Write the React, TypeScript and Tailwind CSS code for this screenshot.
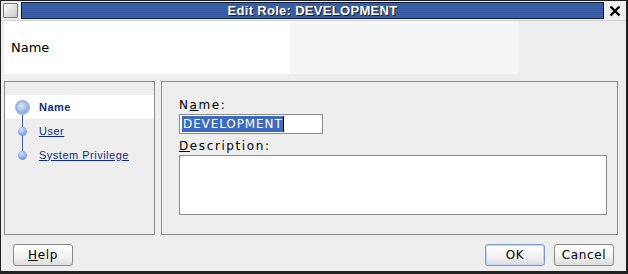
import React from 'react';

const font = { fontFamily: '"DejaVu Sans", "Liberation Sans", sans-serif' };
const navFont = { fontFamily: '"Liberation Sans", Arial, sans-serif' };

function Step({ label, active, first, last }: { label: string; active?: boolean; first?: boolean; last?: boolean }) {
  return (
    <div className={`relative flex items-center h-[24px] pl-[34px] ${active ? 'bg-white' : ''}`}>
      <div className="absolute left-[17px] w-px bg-[#3b63b8]" style={{ top: first ? 12 : 0, bottom: last ? 12 : 0 }} />
      <div
        className={`absolute rounded-full ${active ? 'left-[10px] w-[15px] h-[15px] border-2 border-[#9bb6e6] bg-[radial-gradient(circle_at_40%_35%,#dfe9fb,#6f95d8)]' : 'left-[13px] w-[9px] h-[9px] bg-[radial-gradient(circle_at_40%_30%,#d4e2fa,#4f7fd2)]'}`}
      />
      <span style={navFont} className={`text-[11px] tracking-[0.5px] text-[#0f2c8c] ${active ? 'font-bold' : 'underline'}`}>
        {label}
      </span>
    </div>
  );
}

function Btn({ children, primary }: { children: React.ReactNode; primary?: boolean }) {
  return (
    <button
      className={`w-[60px] h-[22px] rounded-[3px] border text-[12px] tracking-[0.6px] text-black bg-[linear-gradient(#ffffff,#f2f2f2_60%,#dcdcdc)] ${
        primary ? 'border-[#7b98cf] shadow-[inset_0_0_0_1px_#c7d6f0]' : 'border-[#8a8a8a]'
      }`}
    >
      {children}
    </button>
  );
}

export default function App() {
  return (
    <div style={font} className="w-[628px] h-[274px] bg-[#eeeeee] border border-[#222] border-b-[3px] border-r-[2px] flex flex-col overflow-hidden">
      {/* title bar */}
      <div className="h-[20px] flex items-center gap-[2px] px-[2px] bg-[#eeeeee] border-b border-[#d0d0d0]">
        <div className="w-[15px] h-[15px] border border-[#777] bg-[linear-gradient(135deg,#ffffff,#c8c8c8)] rounded-[1px]" />
        <div className="flex-1 h-[17px] ml-[1px] border border-[#0d1a33] bg-[repeating-linear-gradient(#3f61a8_0px,#3f61a8_1px,#3559a0_1px,#3559a0_2px)] flex items-center justify-center">
          <span style={navFont} className="text-white font-bold text-[13px] tracking-[0.3px] [text-shadow:1px_1px_0_#1a1a1a]">
            Edit Role: DEVELOPMENT
          </span>
        </div>
        <div className="w-[18px] flex items-center justify-center">
          <svg width="12" height="12" viewBox="0 0 12 12">
            <path d="M1.5 1.5 L10.5 10.5 M10.5 1.5 L1.5 10.5" stroke="#000" strokeWidth="2.4" />
          </svg>
        </div>
      </div>

      {/* header */}
      <div className="flex h-[53px] ml-[3px]">
        <div className="w-[286px] bg-white flex items-center pl-[7px]">
          <span className="text-[13px] text-black">Name</span>
        </div>
        <div className="w-[229px] bg-[#f5f5f5]" />
        <div className="flex-1" />
      </div>

      {/* body */}
      <div className="flex gap-[6px] mt-[7px] ml-[3px] mr-[8px]">
        <div className="w-[151px] h-[154px] border border-[#8c8c8c] bg-[#eeeeee] pt-[13px]">
          <Step label="Name" active first />
          <Step label="User" />
          <Step label="System Privilege" last />
        </div>
        <div className="flex-1 h-[154px] border border-[#8c8c8c] bg-[#eeeeee] pl-[17px] pr-[10px] pt-[16px] flex flex-col">
          <label className="text-[12px] tracking-[1.6px] text-black leading-[15px]">
            N<span className="underline">a</span>me:
          </label>
          <div className="w-[144px] h-[20px] mt-[1px] border border-[#8c8c8c] bg-white flex items-center pl-[2px]">
            <span className="text-[12px] tracking-[0.9px] text-white bg-[#3c6ac0] pl-[1px] leading-[16px]">DEVELOPMENT</span>
            <span className="w-px h-[16px] bg-black" />
          </div>
          <label className="text-[12px] tracking-[1.6px] text-black leading-[15px] mt-[5px]">
            <span className="underline">D</span>escription:
          </label>
          <div className="h-[60px] mt-[1px] border border-[#8c8c8c] bg-white" />
        </div>
      </div>

      {/* footer */}
      <div className="flex items-center mt-[9px] pl-[12px] pr-[12px]">
        <Btn>
          <span className="underline">H</span>elp
        </Btn>
        <div className="flex-1" />
        <Btn primary>OK</Btn>
        <div className="w-[9px]" />
        <Btn>Cancel</Btn>
      </div>
    </div>
  );
}
